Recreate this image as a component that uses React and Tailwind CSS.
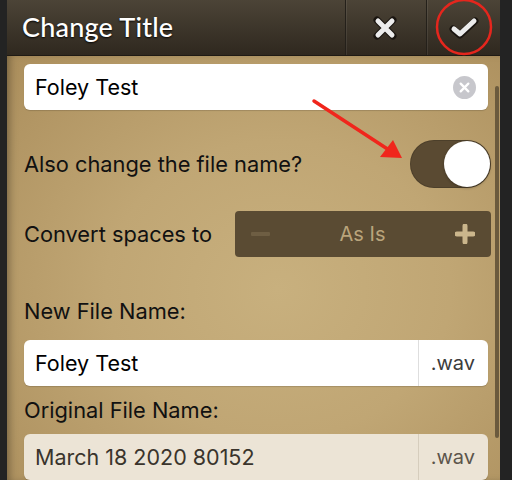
import React from 'react';

const ClearIcon = () => (
  <svg width="23" height="23" viewBox="0 0 24 24">
    <circle cx="12" cy="12" r="12" fill="#c7c7cc" />
    <path d="M8 8 L16 16 M16 8 L8 16" stroke="#fff" strokeWidth="2.4" strokeLinecap="round" />
  </svg>
);

const Header = () => (
  <div className="flex h-[56px] shrink-0 items-stretch bg-gradient-to-b from-[#4c4437] to-[#2f281f] border-b border-[#1f1a14]">
    <div className="flex flex-1 items-center pl-[15px]">
      <h1
        className="text-[27px] text-white [text-shadow:0_1px_2px_rgba(0,0,0,0.9)] tracking-[0.2px]"
        style={{ fontFamily: '"Lato", "Open Sans", sans-serif', fontWeight: 500 }}
      >
        Change Title
      </h1>
    </div>
    <div className="flex w-[81px] items-center justify-center pr-[3px] border-l border-[#24201a] shadow-[inset_1px_0_0_rgba(255,255,255,0.08)]">
      <svg width="24" height="24" viewBox="0 0 24 24">
        <path d="M4 4 L20 20 M20 4 L4 20" stroke="#1a1510" strokeWidth="7" strokeLinecap="round" />
        <path d="M5 5 L19 19 M19 5 L5 19" stroke="#ececec" strokeWidth="5" strokeLinecap="round" />
      </svg>
    </div>
    <div className="flex w-[74px] items-center justify-center border-l border-[#24201a] shadow-[inset_1px_0_0_rgba(255,255,255,0.08)]">
      <svg width="30" height="24" viewBox="0 0 30 24">
        <path d="M4 13 L11 19 L26 5" fill="none" stroke="#1a1510" strokeWidth="7" strokeLinecap="round" strokeLinejoin="round" />
        <path d="M5 13 L11 18 L25 5" fill="none" stroke="#ececec" strokeWidth="5" strokeLinecap="round" strokeLinejoin="round" />
      </svg>
    </div>
  </div>
);

const FileInput = ({ value, muted }) => (
  <div
    className={`flex h-[46px] items-stretch rounded-[6px] ${muted ? 'bg-[#ece4d6]' : 'bg-white'} shadow-[0_1px_1px_rgba(0,0,0,0.15)]`}
  >
    <div className={`flex flex-1 items-center pl-[11px] text-[21.5px] ${muted ? 'text-[#3a342c]' : 'text-black'}`}>{value}</div>
    <div className={`flex w-[70px] items-center justify-end pr-[13px] border-l ${muted ? 'border-[#d6cdbd] text-[#5c554b]' : 'border-[#dedede] text-[#3c3c3c]'} text-[20px]`}>
      .wav
    </div>
  </div>
);

export default function App() {
  return (
    <div className="flex h-[480px] w-[512px] overflow-hidden bg-[#222]" style={{ fontFamily: 'Inter, "Open Sans", sans-serif' }}>
      <div className="w-[7px] bg-[#232323]" />
      <div className="relative flex flex-1 flex-col">
        <Header />
        <div className="relative flex flex-1 shrink-0 flex-col bg-[radial-gradient(ellipse_at_55%_55%,#c8b07e_0%,#c0a674_45%,#ab8e5c_100%)] shadow-[inset_6px_0_8px_-4px_rgba(0,0,0,0.35)] pl-[17px] pr-[5px]">
          <div className="mt-[8px] mr-[7px] flex h-[46px] shrink-0 items-center justify-between rounded-[6px] bg-white pl-[11px] pr-[12px] text-[21.5px] text-black shadow-[0_1px_1px_rgba(0,0,0,0.15)]">
            <span>Foley Test</span>
            <ClearIcon />
          </div>

          <div className="mt-[30px] mr-[4px] flex shrink-0 items-center justify-between">
            <span className="text-[21.8px] text-[#111]">Also change the file name?</span>
            <div className="flex h-[48px] w-[81px] items-center justify-end rounded-full bg-[#5a4a32] pr-[1px] shadow-[inset_0_0_0_1px_rgba(0,0,0,0.15)]">
              <div className="h-[46px] w-[46px] rounded-full bg-white shadow-[0_1px_3px_rgba(0,0,0,0.3)]" />
            </div>
          </div>

          <div className="mt-[23px] mr-[4px] flex shrink-0 items-center justify-between">
            <span className="text-[21.8px] text-[#111]">Convert spaces to</span>
            <div className="flex h-[46px] w-[256px] items-center justify-between rounded-[4px] bg-[#5a4b33] px-[16px]">
              <span className="h-[4px] w-[19px] rounded-[1px] bg-[#6e5e43]" />
              <span className="text-[20px] text-[#b9a47c]">As Is</span>
              <svg width="20" height="20" viewBox="0 0 20 20">
                <path d="M10 2 V18 M2 10 H18" stroke="#cbb68c" strokeWidth="5" strokeLinecap="round" />
              </svg>
            </div>
          </div>

          <div className="mt-[41px] shrink-0 text-[21.8px] leading-[26px] text-[#111]">New File Name:</div>
          <div className="mt-[16px] mr-[7px] shrink-0">
            <FileInput value="Foley Test" />
          </div>
          <div className="mt-[11px] shrink-0 text-[21.8px] leading-[26px] text-[#111]">Original File Name:</div>
          <div className="mt-[11px] mr-[7px] shrink-0">
            <FileInput value="March 18 2020 80152" muted />
          </div>

          <div className="absolute right-[1px] top-[30px] h-[352px] w-[4px] rounded-full bg-[#6b5a3d]" />
        </div>

        <svg className="pointer-events-none absolute left-0 top-0" width="493" height="480">
          <circle cx="457" cy="27" r="27" fill="none" stroke="#e5261d" strokeWidth="2.5" />
          <line x1="307" y1="101" x2="382" y2="150" stroke="#f0261c" strokeWidth="3.5" strokeLinecap="round" />
          <polygon points="395,158 373,157 386,140" fill="#f0261c" />
        </svg>
      </div>
      <div className="w-[12px] bg-[#232323]" />
    </div>
  );
}
